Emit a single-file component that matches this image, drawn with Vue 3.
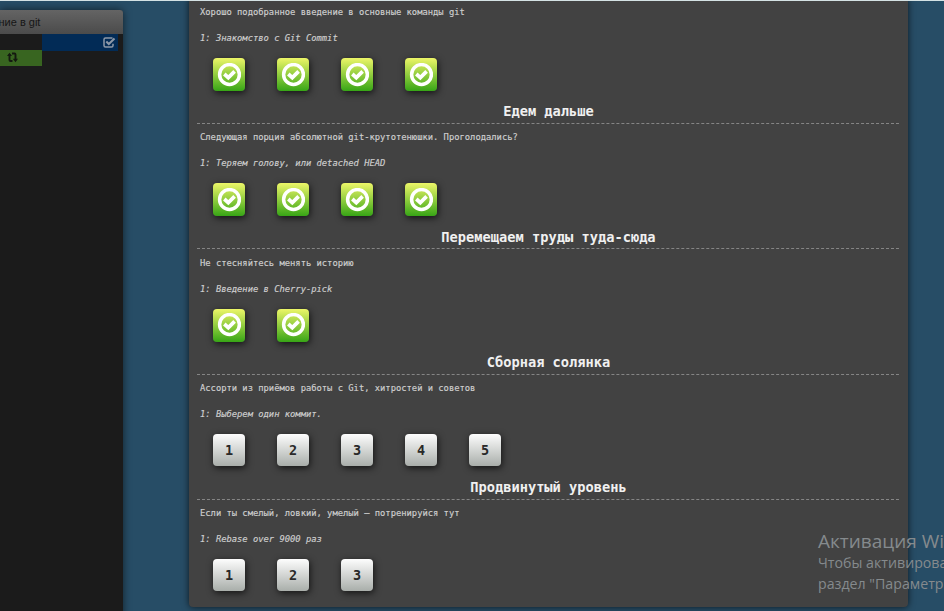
<script setup>
const sections = [
  { title: '', about: 'Хорошо подобранное введение в основные команды git', label: '1: Знакомство с Git Commit', count: 4, solved: true },
  { title: 'Едем дальше', about: 'Следующая порция абсолютной git-крутотенюшки. Проголодались?', label: '1: Теряем голову, или detached HEAD', count: 4, solved: true },
  { title: 'Перемещаем труды туда-сюда', about: 'Не стесняйтесь менять историю', label: '1: Введение в Cherry-pick', count: 2, solved: true },
  { title: 'Сборная солянка', about: 'Ассорти из приёмов работы с Git, хитростей и советов', label: '1: Выберем один коммит.', count: 5, solved: false },
  { title: 'Продвинутый уровень', about: 'Если ты смелый, ловкий, умелый – потренируйся тут', label: '1: Rebase over 9000 раз', count: 3, solved: false },
]
</script>

<template>
  <div class="screen">
    <aside class="terminal">
      <header class="bar"><span>ние в git</span></header>
      <div class="status">
        <div class="command">
          <svg width="13" height="11" viewBox="0 0 13 11">
            <path d="M9.5 1H2.5Q1 1 1 2.500V8.500Q1 10 2.500 10H8.500Q10 10 10 8.500V6.800" fill="none" stroke="#8e99a8" stroke-width="1.5" />
            <path d="M3.300 4.500L5.800 7L11.500 1.500" fill="none" stroke="#8e99a8" stroke-width="2" />
          </svg>
        </div>
      </div>
      <div class="result">
        <svg width="11" height="11" viewBox="0 0 11 11">
          <path d="M2.500 2V8Q2.500 9 3.500 9H5.500M5 1.500H7.500Q8.500 1.500 8.500 2.500V7.500" fill="none" stroke="#141a10" stroke-width="1.900" />
          <path d="M0 4L2.500 .8L5 4ZM5.800 6.800H11L8.500 10.200Z" fill="#141a10" />
        </svg>
      </div>
    </aside>

    <main class="panel">
      <section v-for="(s, i) in sections" :key="i" class="level">
        <p class="about">{{ s.about }}</p>
        <p class="label">{{ s.label }}</p>
        <div class="buttons">
          <div v-for="n in s.count" :key="n" class="button" :class="{ solved: s.solved }">
            <svg v-if="s.solved" width="24" height="24" viewBox="0 0 24 24">
              <circle cx="12.500" cy="11.500" r="9.900" fill="none" stroke="#fff" stroke-width="3.500" />
              <path d="M7.300 11L11.300 14.600L17.600 8.400" fill="none" stroke="#fff" stroke-width="3.700" />
            </svg>
            <span v-else>{{ n }}</span>
          </div>
        </div>
        <h2 v-if="i < sections.length - 1">{{ sections[i + 1].title }}</h2>
      </section>
    </main>

    <div class="activation">
      <div class="act-title">Активация Windows</div>
      <div class="act-text">Чтобы активировать Windows,</div>
      <div class="act-text">раздел "Параметры".</div>
    </div>
  </div>
</template>

<style>
body { margin: 0; overflow: hidden; }
</style>

<style scoped>
* { box-sizing: border-box; }
.screen {
  position: relative;
  display: flex;
  width: 944px;
  height: 611px;
  overflow: hidden;
  background: #274d66;
  border-top: 1px solid #d4e2e4;
}
.terminal {
  flex: none;
  width: 123px;
  height: 620px;
  margin-top: 9px;
  background: #1b1b1b;
  border-radius: 0 4px 0 0;
  box-shadow: 0 0 8px rgba(0, 0, 0, .6);
}
.bar {
  height: 24px;
  border-radius: 0 3px 0 0;
  background: linear-gradient(#646464, #4b4b4b);
  font: 11px/25px "Liberation Sans", sans-serif;
  color: #161616;
  white-space: nowrap;
}
.bar span { margin-left: -1.500px; }
.status { display: flex; height: 16px; padding-left: 42px; }
.command {
  display: flex;
  justify-content: flex-end;
  width: 76px;
  height: 17px;
  padding: 3px 2px 0 0;
  background: #022b56;
}
.result { width: 42px; height: 16px; padding: 2px 0 0 7px; background: #386520; }
.result svg, .command svg { display: block; }
.panel {
  flex: none;
  width: 719px;
  height: 609px;
  margin: -3px 0 0 66px;
  padding: 0 9px 0 8px;
  background: #424242;
  border-radius: 4px;
  box-shadow: 0 0 7px rgba(0, 0, 0, .7);
  font-family: "DejaVu Sans Mono", monospace;
}
.level { height: 125.3px; padding-top: 7px; }
p {
  margin: 0;
  padding-left: 3px;
  font-size: 8.8px;
  line-height: 14px;
  color: #cfcfcf;
  white-space: pre;
  -webkit-text-stroke: .15px #cfcfcf;
}
.label { margin-top: 12px; font-style: italic; }
.buttons { display: flex; align-items: flex-start; height: 46px; gap: 32px; padding: 13px 0 0 16px; }
.button {
  display: flex;
  align-items: center;
  justify-content: center;
  width: 32px;
  height: 32px;
  border-radius: 4px;
  background: linear-gradient(#fdfdfd, #a9aeaa);
  box-shadow: 1px 2px 7px rgba(0, 0, 0, .7);
  font-size: 13.5px;
  font-weight: bold;
  color: #292929;
}
.solved { height: 33px; background: linear-gradient(#edf668, #37a516); }
h2 {
  height: 33.1px;
  margin: 0;
  padding: 11.300px 0 0 1px;
  border-bottom: 1px dashed #858585;
  font-size: 13.7px;
  line-height: 19px;
  text-align: center;
  color: #f0f0f0;
}
.activation {
  position: absolute;
  left: 818px;
  top: 528px;
  font-family: "Open Sans", sans-serif;
  color: #858a8d;
  white-space: nowrap;
}
.act-title { font-size: 19px; line-height: 24px; }
.act-text { font-size: 14.200px; line-height: 20px; }
.act-text:last-child { padding-top: 1px; }
</style>
